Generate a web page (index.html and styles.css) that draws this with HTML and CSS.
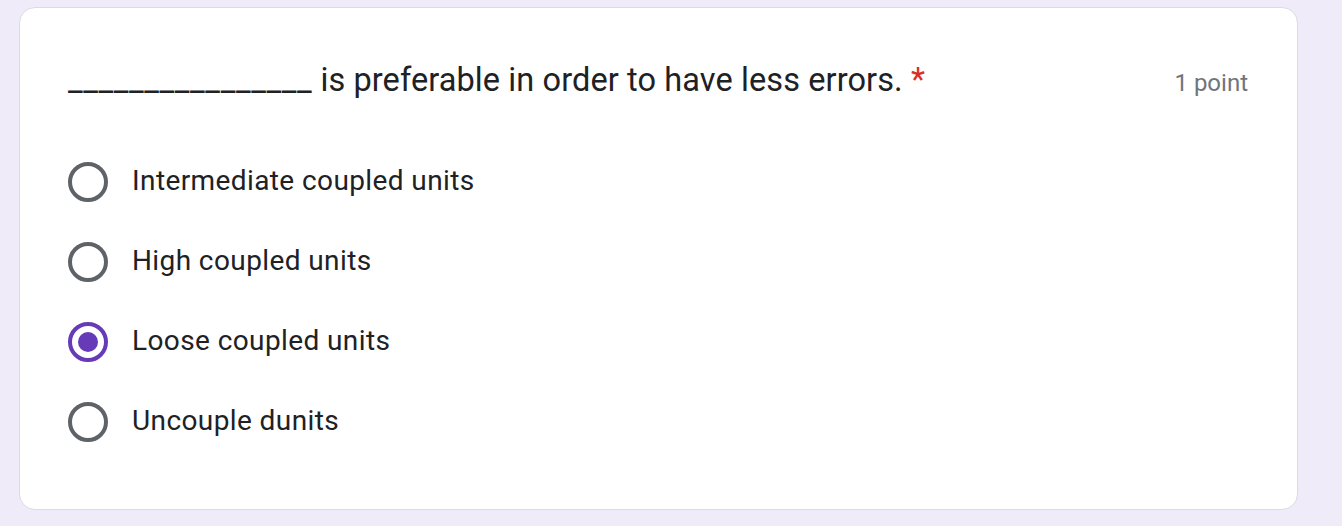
FILE: index.html
```html
<!DOCTYPE html>
<html lang="en">
<head>
<meta charset="utf-8">
<title>Question</title>
<link rel="stylesheet" href="styles.css">
</head>
<body>
  <div class="card">
    <div class="header">
      <div class="title"><span class="blank">________________</span> is preferable in order to have less errors. <span class="req">*</span></div>
      <div class="points">1 point</div>
    </div>
    <div class="options">
      <div class="option"><span class="radio"></span><span class="label">Intermediate coupled units</span></div>
      <div class="option"><span class="radio"></span><span class="label">High coupled units</span></div>
      <div class="option"><span class="radio checked"></span><span class="label">Loose coupled units</span></div>
      <div class="option"><span class="radio"></span><span class="label">Uncouple dunits</span></div>
    </div>
  </div>
</body>
</html>
```
FILE: styles.css
```css
html, body {
  margin: 0;
  padding: 0;
  background: #f0ebf8;
}
body {
  padding: 7px 0 0 19px;
  font-family: Roboto, "Liberation Sans", sans-serif;
  color: #202124;
}
.card {
  box-sizing: border-box;
  width: 1279px;
  background: #fff;
  border: 1px solid #dadce0;
  border-radius: 16px;
  padding: 48px 49px 47px 48px;
}
.header {
  display: flex;
  justify-content: space-between;
  align-items: baseline;
}
.title {
  font-size: 32.5px;
  line-height: 48px;
  letter-spacing: 0.1px;
}
.blank {
  letter-spacing: 0.6px;
}
.req {
  color: #d93025;
}
.points {
  font-size: 24px;
  color: #70757a;
}
.options {
  margin-top: 38px;
  display: flex;
  flex-direction: column;
}
.option {
  height: 80px;
  display: flex;
  align-items: center;
  gap: 24px;
}
.radio {
  box-sizing: border-box;
  width: 40px;
  height: 40px;
  border: 4px solid #5f6368;
  border-radius: 50%;
  display: flex;
  align-items: center;
  justify-content: center;
  flex: none;
}
.radio.checked {
  border-color: #673ab7;
}
.radio.checked::after {
  content: "";
  width: 20px;
  height: 20px;
  border-radius: 50%;
  background: #673ab7;
}
.label {
  font-size: 28px;
  letter-spacing: 0.4px;
  position: relative;
  top: -2px;
}
```
